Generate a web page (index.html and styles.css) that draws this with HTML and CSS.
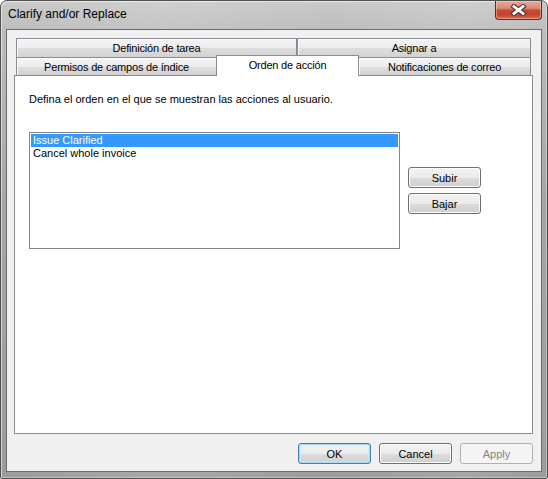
FILE: index.html
```html
<!DOCTYPE html>
<html lang="es">
<head>
<meta charset="utf-8">
<title>Clarify and/or Replace</title>
<link rel="stylesheet" href="styles.css">
</head>
<body>
<div class="window">
  <div class="titlebar">
    <span class="title">Clarify and/or Replace</span>
    <div class="close">
      <svg width="17" height="12" viewBox="0 0 17 12">
        <path d="M4 2.5 L13 9.5 M13 2.5 L4 9.5" stroke="#4a3a38" stroke-width="5" stroke-linecap="square" fill="none"/>
        <path d="M4 2.5 L13 9.5 M13 2.5 L4 9.5" stroke="#ffffff" stroke-width="2.8" stroke-linecap="square" fill="none"/>
      </svg>
    </div>
  </div>
  <div class="client">
    <div class="tabs">
      <div class="tabrow row1">
        <div class="tab t-def">Definición de tarea</div>
        <div class="tab t-asig">Asignar a</div>
      </div>
      <div class="tabrow row2">
        <div class="tab t-perm">Permisos de campos de índice</div>
        <div class="tab t-orden selected">Orden de acción</div>
        <div class="tab t-notif">Notificaciones de correo</div>
      </div>
    </div>
    <div class="panel">
      <p class="desc">Defina el orden en el que se muestran las acciones al usuario.</p>
      <div class="listrow">
        <div class="listbox">
          <div class="item selected-item">Issue Clarified</div>
          <div class="item">Cancel whole invoice</div>
        </div>
        <div class="sidebtns">
          <button class="btn">Subir</button>
          <button class="btn">Bajar</button>
        </div>
      </div>
    </div>
    <div class="footer">
      <button class="btn default">OK</button>
      <button class="btn">Cancel</button>
      <button class="btn disabled">Apply</button>
    </div>
  </div>
</div>
</body>
</html>
```
FILE: styles.css
```css
html, body {
  margin: 0;
  padding: 0;
  background: #ffffff;
}

.window {
  width: 548px;
  height: 479px;
  box-sizing: border-box;
  border: 1px solid #505050;
  border-radius: 7px 7px 2px 2px;
  background: linear-gradient(to right, rgba(255,255,255,0) 0, rgba(255,255,255,0.12) 30%, rgba(255,255,255,0) 60%, rgba(255,255,255,0.1) 85%, rgba(255,255,255,0) 100%),
              linear-gradient(to bottom, #c9c9c9 0, #bdbdbd 29px, #a6a6a6 200px, #9c9c9c 100%);
  box-shadow: inset 1px 1px 0 rgba(255,255,255,0.55), inset -1px -1px 0 rgba(255,255,255,0.35);
  display: flex;
  flex-direction: column;
  font-family: "Liberation Sans", Arial, sans-serif;
  font-size: 11px;
  color: #000;
}

.titlebar {
  height: 28px;
  display: flex;
  align-items: flex-start;
  flex: 0 0 auto;
}

.title {
  padding: 6px 0 0 7px;
  font-size: 12px;
  line-height: 15px;
  color: #000;
}

.close {
  margin-left: auto;
  margin-right: 5px;
  width: 47px;
  height: 19px;
  box-sizing: border-box;
  border: 1px solid #5b2a22;
  border-top: none;
  border-radius: 0 0 4px 4px;
  background: linear-gradient(to bottom, #e9aa98 0%, #d98a76 40%, #c24a33 52%, #c4452d 75%, #d96a4f 100%);
  box-shadow: inset 0 0 0 1px rgba(255,220,210,0.45);
  display: flex;
  align-items: center;
  justify-content: center;
}

.close svg {
  display: block;
}

.client {
  flex: 1 1 auto;
  margin: 0 5px 6px 5px;
  border: 1px solid #6b6b6b;
  background: #f0f0f0;
  padding: 8px 8px 7px 7px;
  display: flex;
  flex-direction: column;
  min-height: 0;
}

.tabs {
  margin: 0 2px;
  flex: 0 0 auto;
}

.tabrow {
  display: flex;
}

.row1 {
  height: 19px;
}

.row2 {
  height: 18px;
  align-items: flex-end;
}

.tab {
  box-sizing: border-box;
  border: 1px solid #898c95;
  border-bottom: none;
  background: linear-gradient(to bottom, #f4f4f4 0%, #ececec 50%, #dedede 51%, #d2d2d2 100%);
  box-shadow: inset 1px 1px 0 #fbfbfb;
  text-align: center;
  white-space: nowrap;
  letter-spacing: -0.2px;
}

.row1 .tab {
  height: 19px;
  padding-top: 1px;
  line-height: 17px;
}

.t-def {
  flex: 0 0 281px;
}

.t-asig {
  flex: 1 1 auto;
}

.row2 .tab {
  height: 18px;
  padding-top: 1px;
  line-height: 16px;
}

.t-perm {
  flex: 0 0 201px;
}

.row2 .t-orden {
  flex: 0 0 143px;
  margin-left: -1px;
}

.t-notif {
  flex: 1 1 auto;
  margin-left: -1px;
}

.row2 .selected {
  height: 21px;
  margin-bottom: -1px;
  line-height: 17px;
  background: #ffffff;
  box-shadow: none;
  position: relative;
  z-index: 2;
}

.panel {
  flex: 1 1 auto;
  border: 1px solid #898c95;
  background: #ffffff;
  padding: 17px 0 0 14px;
  position: relative;
  z-index: 1;
}

.desc {
  margin: 0;
  line-height: 13px;
}

.listrow {
  display: flex;
  margin-top: 26px;
}

.listbox {
  width: 371px;
  height: 117px;
  box-sizing: border-box;
  border: 1px solid #82878f;
  background: #fff;
  padding: 1px;
}

.item {
  line-height: 13px;
  padding-left: 2px;
}

.selected-item {
  background: #3399ff;
  color: #ffffff;
}

.sidebtns {
  display: flex;
  flex-direction: column;
  gap: 5px;
  margin-left: 8px;
  padding-top: 35px;
}

.btn {
  width: 73px;
  height: 21px;
  box-sizing: border-box;
  border: 1px solid #707070;
  border-radius: 3px;
  background: linear-gradient(to bottom, #f2f2f2 0%, #ebebeb 50%, #dddddd 51%, #cfcfcf 100%);
  box-shadow: inset 0 0 0 1px #fcfcfc;
  font-family: "Liberation Sans", Arial, sans-serif;
  font-size: 11px;
  color: #000;
  padding: 0;
  margin: 0;
  line-height: 18px;
}

.footer {
  display: flex;
  justify-content: flex-end;
  gap: 8px;
  margin-top: 9px;
  flex: 0 0 auto;
}

.btn.default {
  border-color: #3c7fb1;
  box-shadow: inset 0 0 0 1px #a9dcf6, inset 0 0 0 2px rgba(200,235,252,0.5);
}

.btn.disabled {
  border-color: #adb2b5;
  background: #f4f4f4;
  box-shadow: none;
  color: #838383;
}
```
